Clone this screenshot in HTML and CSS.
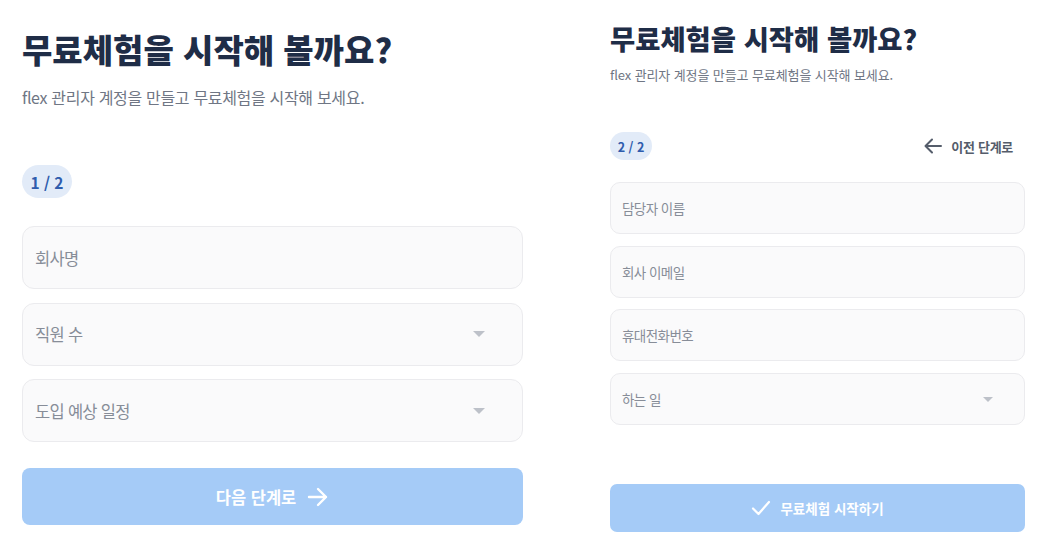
FILE: index.html
```html
<!DOCTYPE html>
<html lang="ko">
<head>
<meta charset="utf-8">
<title>무료체험</title>
<link rel="stylesheet" href="styles.css">
</head>
<body>
<div class="page">
  <section class="panel panel-lg">
    <h1 class="title">무료체험을 시작해 볼까요?</h1>
    <p class="subtitle">flex 관리자 계정을 만들고 무료체험을 시작해 보세요.</p>
    <div class="step-row">
      <span class="badge">1 / 2</span>
    </div>
    <div class="fields">
      <div class="field"><span class="ph">회사명</span></div>
      <div class="field select"><span class="ph">직원 수</span><span class="caret"></span></div>
      <div class="field select"><span class="ph">도입 예상 일정</span><span class="caret"></span></div>
    </div>
    <button class="btn">
      <span>다음 단계로</span>
      <svg class="btn-icon" width="22" height="20" viewBox="0 0 22 20" fill="none" stroke="#fff" stroke-width="2.4" stroke-linecap="round" stroke-linejoin="round"><path d="M2 10h17M11 2l8 8-8 8"/></svg>
    </button>
  </section>

  <section class="panel panel-sm">
    <h1 class="title">무료체험을 시작해 볼까요?</h1>
    <p class="subtitle">flex 관리자 계정을 만들고 무료체험을 시작해 보세요.</p>
    <div class="step-row">
      <span class="badge">2 / 2</span>
      <a class="back">
        <svg width="19" height="16" viewBox="0 0 19 16" fill="none" stroke="#555d6b" stroke-width="2" stroke-linecap="round" stroke-linejoin="round"><path d="M17 8H2M8 1.5L1.5 8 8 14.5"/></svg>
        <span>이전 단계로</span>
      </a>
    </div>
    <div class="fields">
      <div class="field"><span class="ph">담당자 이름</span></div>
      <div class="field"><span class="ph">회사 이메일</span></div>
      <div class="field"><span class="ph">휴대전화번호</span></div>
      <div class="field select"><span class="ph">하는 일</span><span class="caret"></span></div>
    </div>
    <button class="btn">
      <svg class="btn-icon" width="20" height="16" viewBox="0 0 20 16" fill="none" stroke="#fff" stroke-width="2.2" stroke-linecap="round" stroke-linejoin="round"><path d="M2 8.5l5.5 5.5L18 2"/></svg>
      <span>무료체험 시작하기</span>
    </button>
  </section>
</div>
</body>
</html>
```

FILE: styles.css
```css
* { box-sizing: border-box; }

html, body {
  margin: 0;
  padding: 0;
  background: #ffffff;
}

body {
  font-family: "Noto Sans CJK KR", "Noto Sans", "Liberation Sans", sans-serif;
  color: #1f2d47;
}

.page {
  display: flex;
  align-items: flex-start;
}

.panel {
  display: flex;
  flex-direction: column;
}

.title {
  margin: 0;
  font-weight: 900;
  color: #1f2d47;
  white-space: nowrap;
}

.subtitle {
  margin: 0;
  color: #6f7684;
  white-space: nowrap;
}

.step-row {
  display: flex;
  align-items: center;
  justify-content: space-between;
}

.badge {
  display: inline-flex;
  align-items: center;
  justify-content: center;
  background: #e2ebf8;
  color: #2f5cad;
  font-weight: 700;
  border-radius: 999px;
}

.back {
  display: inline-flex;
  align-items: center;
  color: #555d6b;
  font-weight: 700;
  cursor: pointer;
}

.fields {
  display: flex;
  flex-direction: column;
}

.field {
  display: flex;
  align-items: center;
  justify-content: space-between;
  background: #fafafb;
  border: 1.5px solid #ebebee;
}

.ph {
  color: #878d98;
}

.caret {
  width: 0;
  height: 0;
  border-left: 6px solid transparent;
  border-right: 6px solid transparent;
  border-top: 6px solid #bdc1c9;
}

.btn {
  display: flex;
  align-items: center;
  justify-content: center;
  border: none;
  background: #a5cbf7;
  color: #ffffff;
  font-family: inherit;
  font-weight: 700;
  padding: 0;
}

/* Large (left) panel */
.panel-lg {
  width: 545px;
  padding: 29px 22px 0 22px;
}

.panel-lg .title {
  font-size: 33px;
  line-height: 40px;
  letter-spacing: 0;
}

.panel-lg .subtitle {
  margin-top: 17px;
  font-size: 16px;
  line-height: 22px;
  letter-spacing: -0.32px;
}

.panel-lg .step-row {
  margin-top: 57px;
}

.panel-lg .badge {
  width: 50px;
  height: 33px;
  font-size: 15.5px;
}

.panel-lg .fields {
  margin-top: 28px;
  gap: 13.5px;
}

.panel-lg .field {
  height: 63px;
  border-radius: 12px;
  padding: 0 37px 0 12px;
}

.panel-lg .ph {
  font-size: 16.5px;
  letter-spacing: -0.7px;
}

.panel-lg .btn {
  margin-top: 26px;
  height: 57px;
  border-radius: 8px;
  font-size: 16.5px;
  gap: 11px;
}

/* Small (right) panel */
.panel-sm {
  width: 415px;
  margin-left: 65px;
  padding-top: 21px;
}

.panel-sm .title {
  font-size: 27.4px;
  line-height: 34px;
  letter-spacing: 0;
}

.panel-sm .subtitle {
  margin-top: 11px;
  font-size: 13px;
  line-height: 18px;
  letter-spacing: -0.1px;
}

.panel-sm .step-row {
  margin-top: 48px;
}

.panel-sm .badge {
  width: 42px;
  height: 28px;
  font-size: 12.5px;
}

.panel-sm .back {
  gap: 8px;
  font-size: 13px;
  letter-spacing: -0.3px;
  margin-right: 12px;
}

.panel-sm .fields {
  margin-top: 22px;
  gap: 11.7px;
}

.panel-sm .field {
  height: 52px;
  border-radius: 10px;
  padding: 0 31px 0 11px;
}

.panel-sm .ph {
  font-size: 13.5px;
  letter-spacing: -0.55px;
}

.panel-sm .caret {
  border-left-width: 5px;
  border-right-width: 5px;
  border-top-width: 5px;
}

.panel-sm .btn {
  margin-top: 59px;
  height: 48px;
  border-radius: 7px;
  font-size: 13.5px;
  gap: 9px;
}
```
